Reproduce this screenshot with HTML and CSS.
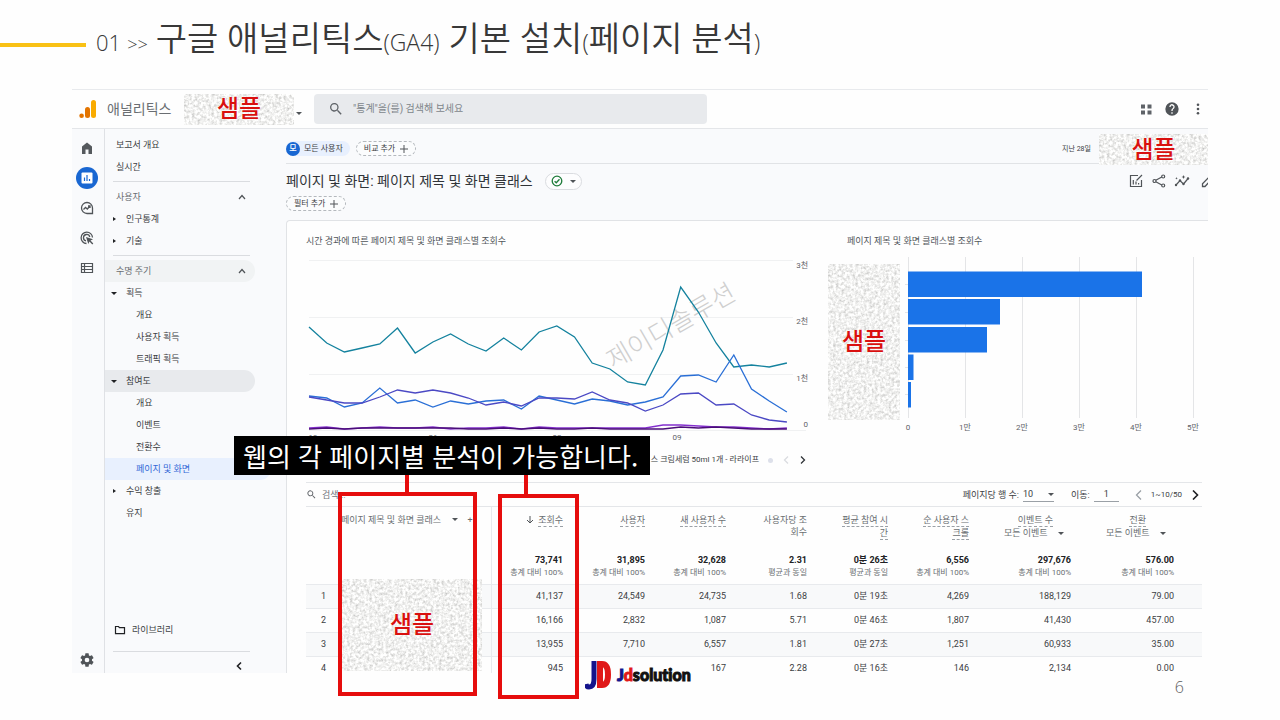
FILE: index.html
```html
<!DOCTYPE html>
<html lang="ko">
<head>
<meta charset="utf-8">
<title>구글 애널리틱스(GA4) 기본 설치</title>
<link rel="stylesheet" href="styles.css">
</head>
<body>
<svg class="defs" width="0" height="0" aria-hidden="true">
  <filter id="grain" x="0" y="0" width="100%" height="100%">
    <feTurbulence type="fractalNoise" baseFrequency="0.36" numOctaves="3" seed="4"/>
    <feColorMatrix values="0.8 0 0 0 0.48  0.8 0 0 0 0.48  0.8 0 0 0 0.47  0 0 0 0 1"/>
  </filter>
</svg>

<header class="slide-head">
  <span class="rule"></span>
  <h1 class="slide-title"><span class="num">01</span><span class="chev">&gt;&gt;</span>구글 애널리틱스<span class="lat">(GA4)</span> 기본 설치<span class="lat">(</span>페이지 분석<span class="lat">)</span></h1>
</header>

<main class="stage">
  <div class="app">
    <div class="topbar">
      <svg class="logo" viewBox="0 0 18 19"><rect x="12" y="0" width="5" height="18" rx="2.5" fill="#f9ab00"/><rect x="6" y="7" width="5" height="11" rx="2.5" fill="#e37400"/><circle cx="2.6" cy="15.8" r="2.3" fill="#e37400"/></svg>
      <span class="brand">애널리틱스</span>
      <div class="mask mask-account"><svg class="grain"><rect width="100%" height="100%" filter="url(#grain)"/></svg><span>샘플</span></div>
      <span class="caret caret-account"></span>
      <label class="search">
        <svg class="i16" viewBox="0 0 24 24"><path fill="#5f6368" d="M15.5 14h-.8l-.3-.3A6.5 6.5 0 1 0 13.700 14.400l.3.3v.8l5 5 1.500-1.500zm-6 0a4.500 4.500 0 1 1 0-9 4.500 4.500 0 0 1 0 9z"/></svg>
        <input type="text" placeholder="&quot;통계&quot;을(를) 검색해 보세요">
      </label>
      <div class="top-actions">
        <button aria-label="앱"><svg class="i16" viewBox="0 0 16 16" fill="#5f6368"><path d="M3 3.500h4v4H3zM9.500 3.500h4v4h-4zM3 9.500h4v4H3zM9.500 9.500h4v4h-4z"/></svg></button>
        <button aria-label="도움말"><svg class="i16" viewBox="0 0 24 24"><path fill="#505458" d="M12 2a10 10 0 1 0 0 20 10 10 0 0 0 0-20zm1 17h-2v-2h2zm2.070-7.750-.9.920C13.450 12.900 13 13.500 13 15h-2v-.5c0-1.100.450-2.100 1.170-2.830l1.240-1.260A2 2 0 1 0 10 9H8a4 4 0 1 1 7.070 2.250z"/></svg></button>
        <button aria-label="더보기"><svg class="i16" viewBox="0 0 16 16" fill="#505458"><circle cx="8" cy="3.700" r="1.300"/><circle cx="8" cy="8" r="1.300"/><circle cx="8" cy="12.300" r="1.300"/></svg></button>
      </div>
    </div>

    <div class="body">
      <nav class="rail" aria-label="기본">
        <button aria-label="홈"><svg class="i16" viewBox="0 0 16 16"><path fill="#55595d" d="M3 14V6.500L8 2.500l5 4V14H9.500V9.500h-3V14z"/></svg></button>
        <button aria-label="보고서" class="on"><svg class="i16" viewBox="0 0 16 16"><rect x="2.500" y="2.500" width="11" height="11" rx="1" fill="#fff"/><path stroke="#1967d2" stroke-width="1.200" d="M5.500 7.500V11M8 5v6M10.500 9v2"/></svg></button>
        <button aria-label="탐색"><svg class="i16" viewBox="0 0 16 16" fill="none" stroke="#505458" stroke-width="1.300"><path d="M13.500 13.500H8A5.500 5.500 0 1 1 13.500 8z"/><path d="M4.500 9.500 6.500 7.500l1.800 1.500 2.700-3M9 6h2v2"/></svg></button>
        <button aria-label="광고"><svg class="i16" viewBox="0 0 16 16" fill="none" stroke="#505458" stroke-width="1.300"><path d="M7.500 13.500A5.700 5.700 0 1 1 13.500 7.500M7 10.800A3.200 3.200 0 1 1 10.800 7"/><path fill="#505458" stroke="none" d="M7 7l7 2.300-2.500 1.300 2.800 2.800-1 1-2.800-2.800L9.300 14z"/></svg></button>
        <button aria-label="구성"><svg class="i16" viewBox="0 0 16 16" fill="none" stroke="#505458" stroke-width="1.200"><path d="M2.500 3.500h11v9h-11zM5.500 3.500v9M2.500 6.500h11M2.500 9.500h11"/></svg></button>
        <button aria-label="관리" class="gear"><svg class="i16" viewBox="0 0 24 24"><path fill="#505458" d="M19.430 12.980a7.800 7.800 0 0 0 0-1.960l2.110-1.650a.5.5 0 0 0 .120-.640l-2-3.460a.5.5 0 0 0-.610-.220l-2.490 1a7.300 7.300 0 0 0-1.690-.980l-.380-2.650A.490.490 0 0 0 14 2h-4a.490.490 0 0 0-.490.420l-.380 2.650c-.610.250-1.170.590-1.690.980l-2.490-1a.490.490 0 0 0-.610.220l-2 3.460a.490.490 0 0 0 .120.640l2.110 1.650a7.900 7.900 0 0 0 0 1.960l-2.110 1.650a.5.5 0 0 0-.120.640l2 3.460c.120.220.390.300.610.220l2.490-1c.520.400 1.080.730 1.690.980l.380 2.650c.030.240.240.420.490.420h4c.250 0 .460-.180.490-.420l.380-2.650a7.700 7.700 0 0 0 1.690-.980l2.490 1c.230.090.490 0 .610-.220l2-3.460a.5.5 0 0 0-.120-.640zM12 15.500a3.500 3.500 0 1 1 0-7 3.500 3.500 0 0 1 0 7z"/></svg></button>
      </nav>

      <nav class="side" aria-label="보고서">
        <a class="item" href="#">보고서 개요</a>
        <a class="item" href="#">실시간</a>
        <hr>
        <button class="item section">사용자<svg class="up" viewBox="0 0 8 8"><path d="M1 6l3-3.500L7 6"/></svg></button>
        <a class="item l1 closed" href="#">인구통계</a>
        <a class="item l1 closed" href="#">기술</a>
        <hr>
        <button class="item section tint">수명 주기<svg class="up" viewBox="0 0 8 8"><path d="M1 6l3-3.500L7 6"/></svg></button>
        <a class="item l1 open" href="#">획득</a>
        <a class="item l2" href="#">개요</a>
        <a class="item l2" href="#">사용자 획득</a>
        <a class="item l2" href="#">트래픽 획득</a>
        <a class="item l1 open parent" href="#">참여도</a>
        <a class="item l2" href="#">개요</a>
        <a class="item l2" href="#">이벤트</a>
        <a class="item l2" href="#">전환수</a>
        <a class="item l2 current" href="#">페이지 및 화면</a>
        <a class="item l1 closed" href="#">수익 창출</a>
        <a class="item l1" href="#">유지</a>
        <a class="item library" href="#"><svg class="folder" viewBox="0 0 12 10"><path d="M1.500 1.500h3l1 1.200h5v6h-9z"/></svg>라이브러리</a>
        <hr>
        <button class="collapse" aria-label="접기"><svg viewBox="0 0 8 10"><path d="M6 1.500L2.500 5 6 8.500"/></svg></button>
      </nav>

      <section class="report">
        <div class="compare">
          <span class="chip-all"><b>모</b>모든 사용자</span>
          <button class="chip">비교 추가<svg class="plus" viewBox="0 0 8 8"><path d="M4 0v8M0 4h8"/></svg></button>
          <span class="range">지난 28일</span>
          <div class="mask mask-date"><svg class="grain"><rect width="100%" height="100%" filter="url(#grain)"/></svg><span>샘플</span></div>
        </div>

        <div class="title-row">
          <h2>페이지 및 화면: 페이지 제목 및 화면 클래스</h2>
          <button class="status" aria-label="상태"><svg class="check" viewBox="0 0 12 12"><circle cx="6" cy="6" r="4.800"/><path d="M3.600 6.200l1.700 1.600 3.200-3.500"/></svg><span class="caret"></span></button>
          <div class="title-actions">
            <button aria-label="맞춤설정"><svg class="i16" viewBox="0 0 16 16" fill="none" stroke="#505458" stroke-width="1.200"><path d="M10 2.500H2.500v11h11V7M5.300 7v4.500M8 8.500v3M10.600 10v1.500M8.500 7.500l5.500-5.500"/></svg></button>
            <button aria-label="공유"><svg class="i16" viewBox="0 0 16 16" fill="none" stroke="#505458" stroke-width="1.200"><path d="M4.800 7.300l6-3.300M4.800 8.700l6 3.300"/><circle cx="3.500" cy="8" r="1.500"/><circle cx="12.200" cy="3.500" r="1.500"/><circle cx="12.200" cy="12.500" r="1.500"/></svg></button>
            <button aria-label="통계"><svg class="i16" viewBox="0 0 16 16"><path fill="none" stroke="#505458" stroke-width="1.200" d="M2 12l4-4.500L9.500 11 14.500 5"/><g fill="#505458"><circle cx="2" cy="12" r="1.200"/><circle cx="6" cy="7.500" r="1.200"/><circle cx="9.500" cy="11" r="1.200"/><circle cx="14" cy="5.500" r="1.200"/><path d="M9.500 2l.6 1.400 1.400.6-1.400.6-.6 1.400-.6-1.400L7.500 4l1.400-.6zM2.500 4l.4.9.9.4-.9.4-.4.900-.4-.9-.9-.4.900-.4z"/></g></svg></button>
            <button aria-label="수정" class="pencil"><svg viewBox="0 0 11 16" fill="none" stroke="#505458" stroke-width="1.300"><path d="M5.500 13.500v-2.700l7-7.300 2.500 2.500-7 7.500z"/></svg></button>
          </div>
        </div>
        <button class="chip chip-filter">필터 추가<svg class="plus" viewBox="0 0 8 8"><path d="M4 0v8M0 4h8"/></svg></button>

        <div class="card">
          <div class="charts">
            <div class="chart">
              <h3>시간 경과에 따른 페이지 제목 및 화면 클래스별 조회수</h3>
              <svg class="lines" viewBox="0 0 522 195">
                <path class="grid" d="M3 10.500H487M3 67.500H487M3 124.500H487M3 180.500H500"/>
                <text class="watermark" x="365" y="85" transform="rotate(-30 365 76)">제이디솔루션</text>
                <g class="axis"><text x="502" y="18">3천</text><text x="502" y="74">2천</text><text x="502" y="131">1천</text><text x="502" y="177">0</text></g>
                <g class="axis mid"><text x="7" y="190">19</text><text x="127" y="190">26</text><text x="251" y="190">02</text><text x="371" y="190">09</text></g>
                <g id="series"></g>
              </svg>
              <div class="legend"><span>스 크림세럼 50ml 1개 - 라라이프</span><i class="dot"></i><button aria-label="이전" disabled><svg viewBox="0 0 8 10"><path d="M6 1.500L2.500 5 6 8.500"/></svg></button><button aria-label="다음"><svg viewBox="0 0 8 10"><path d="M2 1.500L5.500 5 2 8.500"/></svg></button></div>
            </div>
            <div class="chart">
              <h3 class="inset">페이지 제목 및 화면 클래스별 조회수</h3>
              <div class="bars-row">
                <div class="mask mask-bars"><svg class="grain"><rect width="100%" height="100%" filter="url(#grain)"/></svg><span>샘플</span></div>
                <svg class="bars" viewBox="0 0 308 195">
                  <path class="grid dark" d="M8.500 7V168M65.500 7V168M122.500 7V168M179.500 7V168M236.500 7V168M293.500 7V168"/>
                  <path class="grid dark" d="M5 34.500h3M5 62.500h3M5 90.500h3M5 117.500h3M5 144.500h3"/>
                  <g fill="#1a73e8"><rect x="8" y="21.500" width="234" height="25.500"/><rect x="8" y="49" width="92" height="25.500"/><rect x="8" y="77" width="79" height="25.500"/><rect x="8" y="104.500" width="5.500" height="25.500"/><rect x="8" y="132" width="3" height="25.500"/></g>
                  <g class="axis mid"><text x="8" y="180">0</text><text x="65" y="180">1만</text><text x="122" y="180">2만</text><text x="179" y="180">3만</text><text x="236" y="180">4만</text><text x="293" y="180">5만</text></g>
                </svg>
              </div>
            </div>
          </div>

          <div class="tools">
            <label class="find"><svg viewBox="0 0 24 24"><path fill="#5f6368" d="M15.500 14h-.8l-.3-.3A6.500 6.500 0 1 0 13.700 14.400l.3.3v.8l5 5 1.500-1.500zm-6 0a4.500 4.500 0 1 1 0-9 4.500 4.500 0 0 1 0 9z"/></svg><input type="text" placeholder="검색..."></label>
            <label class="rows">페이지당 행 수: <span class="pick"><select><option>10</option></select><i class="caret"></i></span></label>
            <label class="goto">이동: <input type="text" value="1"></label>
            <button class="prev" aria-label="이전 페이지"><svg viewBox="0 0 8 10"><path d="M6 .5L1.500 5 6 9.500"/></svg></button>
            <span class="count">1~10/50</span>
            <button class="next" aria-label="다음 페이지"><svg viewBox="0 0 8 10"><path d="M2 .5L6.500 5 2 9.500"/></svg></button>
          </div>

          <table class="data">
            <colgroup><col class="c-n"><col class="c-name"><col class="c-a"><col class="c-a"><col class="c-b"><col class="c-b"><col class="c-b"><col class="c-b"><col class="c-e"><col class="c-z"></colgroup>
            <thead>
              <tr>
                <th></th>
                <th class="name">페이지 제목 및 화면 클래스 <i class="caret"></i> <i class="plus-s">+</i></th>
                <th><svg class="down" viewBox="0 0 8 8"><path d="M4 0v7M1 4l3 3 3-3"/></svg><u>조회수</u></th>
                <th><u>사용자</u></th>
                <th><u>새 사용자 수</u></th>
                <th>사용자당 조<br>회수</th>
                <th><u>평균 참여 시</u><br><u>간</u></th>
                <th><u>순 사용자 스</u><br><u>크롤</u></th>
                <th class="ev"><u>이벤트 수</u><br><span class="pick"><select aria-label="이벤트"><option>모든 이벤트</option></select><i class="caret"></i></span></th>
                <th class="ev"><u>전환</u><br><span class="pick"><select aria-label="전환"><option>모든 이벤트</option></select><i class="caret"></i></span></th>
              </tr>
            </thead>
            <tbody>
              <tr class="sum"><td></td><td class="name"></td><td><b>73,741</b>총계 대비 100%</td><td><b>31,895</b>총계 대비 100%</td><td><b>32,628</b>총계 대비 100%</td><td><b>2.31</b>평균과 동일</td><td><b>0분 26초</b>평균과 동일</td><td><b>6,556</b>총계 대비 100%</td><td><b>297,676</b>총계 대비 100%</td><td><b>576.00</b>총계 대비 100%</td></tr>
              <tr class="odd"><td>1</td><td class="name"></td><td>41,137</td><td>24,549</td><td>24,735</td><td>1.68</td><td>0분 19초</td><td>4,269</td><td>188,129</td><td>79.00</td></tr>
              <tr><td>2</td><td class="name"></td><td>16,166</td><td>2,832</td><td>1,087</td><td>5.71</td><td>0분 46초</td><td>1,807</td><td>41,430</td><td>457.00</td></tr>
              <tr class="odd"><td>3</td><td class="name"></td><td>13,955</td><td>7,710</td><td>6,557</td><td>1.81</td><td>0분 27초</td><td>1,251</td><td>60,933</td><td>35.00</td></tr>
              <tr><td>4</td><td class="name"></td><td>945</td><td></td><td>167</td><td>2.28</td><td>0분 16초</td><td>146</td><td>2,134</td><td>0.00</td></tr>
            </tbody>
          </table>
        </div>
      </section>
    </div>
  </div>

  <div class="mask mask-table"><svg class="grain"><rect width="100%" height="100%" filter="url(#grain)"/></svg><span>샘플</span></div>
  <div class="stem stem-a"></div>
  <div class="stem stem-b"></div>
  <div class="frame frame-a"></div>
  <div class="frame frame-b"></div>
  <p class="callout">웹의 각 페이지별 분석이 가능합니다.</p>
  <div class="jd">
    <svg viewBox="0 0 28 30"><path fill="none" stroke="#14148c" stroke-width="5" d="M9 1v18q0 8-5 8-2.500 0-3-3"/><path fill="none" stroke="#e01818" stroke-width="6" d="M15 4h2q6 0 6 10.500t-6 10.500h-2z"/></svg>
    <span class="jd-name"><span class="j">J</span><span class="d">d</span>solution</span>
  </div>
</main>

<footer class="slide-foot">6</footer>
<script src="chart.js"></script>
</body>
</html>
```
FILE: chart.js
```js
const STEP = 17.7;
const series = [
  { color: "#14829e", y: [77,93,102,98,94,78,103,92,84,94,101,88,100,82,76,87,113,119,132,135,100,37,62,93,117,115,117,113] },
  { color: "#2a6fd6", y: [146,148,157,153,138,153,150,157,151,154,151,150,159,146,150,154,149,151,155,152,147,126,125,132,105,139,151,162] },
  { color: "#4b49c4", y: [147,150,153,153,147,140,143,140,143,148,155,152,156,148,148,149,142,150,153,161,155,144,143,155,154,165,170,172] },
  { color: "#8430ce", y: [178,177,179,178,177,178,178,177,179,178,178,177,179,177,178,178,178,178,178,178,175,175,176,177,177,178,179,178] },
  { color: "#4a0d78", y: [179,178,179,178,178,178,178,178,178,179,179,178,179,178,179,179,178,179,179,179,179,177,178,177,178,179,179,179] }
];
const group = document.getElementById("series");
for (const s of series) {
  const line = document.createElementNS("http://www.w3.org/2000/svg", "polyline");
  line.setAttribute("points", s.y.map((y, i) => (3 + i * STEP).toFixed(1) + "," + y).join(" "));
  line.setAttribute("stroke", s.color);
  group.appendChild(line);
}
```
FILE: styles.css
```css
* { box-sizing: border-box; }
body {
  margin: 0;
  height: 100vh;
  display: flex;
  flex-direction: column;
  background: #fefefe;
  color: #3c4043;
  font: 9px/14px Roboto, "Noto Sans CJK KR", sans-serif;
}
h1, h2, h3, p { margin: 0; font-weight: 400; }
button, input, select { font: inherit; color: inherit; border: 0; padding: 0; background: none; }
button { display: inline-flex; align-items: center; justify-content: center; }
select { appearance: none; }
a { color: inherit; text-decoration: none; }
hr { border: 0; border-top: 1px solid #dadce0; }
.defs { position: absolute; }
.i16 { width: 16px; height: 16px; display: block; }
.caret { display: inline-block; border: 3px solid transparent; border-top-color: #505458; border-bottom: 0; }

.slide-head { height: 89px; flex: none; display: flex; align-items: center; gap: 10px; }
.rule { width: 86px; height: 4px; background: #f9c115; }
.slide-title { font: 350 34px/48px "Open Sans", "Noto Sans CJK KR", sans-serif; color: #383838; padding-bottom: 8px; white-space: nowrap; }
.num { font-size: 22px; margin-right: 6px; }
.chev { font-size: 18px; margin-right: 8px; }
.lat { font-size: 23px; }

.stage { position: relative; flex: 1; min-height: 0; margin: 0 72px; }
.app { height: 100%; display: flex; flex-direction: column; overflow: hidden; border-top: 1px solid #e8eaed; background: #f9fafc; }
.slide-foot { flex: none; height: 47px; padding: 4px 96px 0 0; text-align: right; font: 300 16px/20px "Open Sans", sans-serif; color: #606060; }

.mask { position: relative; display: flex; align-items: center; justify-content: center; color: #d9100f; font-size: 24px; line-height: 30px; overflow: hidden; }
.mask span { position: relative; font-weight: 500; text-shadow: 0 0 2px #fff; }
.grain { position: absolute; inset: 0; width: 100%; height: 100%; }

.topbar { flex: none; height: 39px; display: flex; align-items: center; background: #fefefe; border-bottom: 1px solid #e4e6e9; padding: 0 2px 0 7px; }
.logo { width: 18px; height: 19px; }
.brand { font-size: 14px; line-height: 20px; color: #6a6e72; width: 77px; margin-left: 10px; white-space: nowrap; }
.mask-account { width: 110px; height: 31px; }
.caret-account { margin: 8px 12px 0 2px; }
.search { flex: 0 1 393px; height: 30px; display: flex; align-items: center; gap: 9px; padding-left: 14px; background: #e8eaed; border-radius: 4px; }
.search input { flex: 1; min-width: 0; font-size: 10px; }
.search input::placeholder { color: #80868b; opacity: 1; }
.top-actions { margin-left: auto; display: flex; gap: 10px; }

.body { flex: 1; min-height: 0; display: flex; }
.rail { width: 33px; flex: none; display: flex; flex-direction: column; align-items: center; gap: 8px; padding: 8px 2px 2px 0; border-right: 1px solid #dfe1e5; }
.rail button { width: 22px; height: 22px; border-radius: 50%; }
.rail .on { background: #1967d2; }
.rail .gear { margin-top: auto; }

.side { width: 166px; flex: none; display: flex; flex-direction: column; padding-top: 5px; }
.side hr { width: 137px; margin: 3px 0 4px 8px; }
.item { display: flex; align-items: center; flex: none; position: relative; width: 150px; height: 22px; padding-left: 11px; border-radius: 0 11px 11px 0; font-size: 9px; text-align: left; }
.section { justify-content: flex-start; color: #6a6e72; padding-right: 9px; }
.up { width: 8px; height: 8px; margin-left: auto; fill: none; stroke: #505458; stroke-width: 1.2; }
.tint { background: #f1f3f4; }
.l1 { padding-left: 21px; }
.l2 { padding-left: 31px; }
.closed::before, .open::before { content: ""; position: absolute; left: 8px; border: 2px solid transparent; }
.closed::before { border-left: 3px solid #202124; border-right: 0; }
.open::before { left: 6px; border: 3px solid transparent; border-top-color: #202124; border-bottom: 0; }
.parent { background: #e8eaed; }
.current { width: auto; background: #e8f0fe; color: #3367d6; }
.library { margin-top: auto; margin-bottom: 7px; gap: 6px; padding-left: 9px; }
.folder { width: 12px; height: 10px; fill: none; stroke: #202124; stroke-width: 1.2; }
.collapse { width: 12px; height: 14px; margin: 3px 0 0 128px; }
.collapse svg { width: 8px; height: 10px; fill: none; stroke: #202124; stroke-width: 1.6; }

.report { flex: 1; min-width: 0; padding-left: 15px; display: flex; flex-direction: column; align-items: stretch; }
.compare { position: relative; flex: none; height: 35px; display: flex; align-items: center; padding-top: 5px; border-bottom: 1px solid #e1e3e6; font-size: 8px; }
.chip-all { display: flex; align-items: center; gap: 4px; height: 15px; padding-right: 7px; border-radius: 8px; background: #e8f0fe; }
.chip-all b { width: 14px; height: 14px; border-radius: 50%; background: #1967d2; color: #fff; text-align: center; font-weight: 500; }
.chip { height: 15px; padding: 0 7px; gap: 5px; border: 1px dashed #b4b8bd; border-radius: 8px; font-size: 8px; line-height: 12px; margin-left: 6px; background: #fbfcfd; }
.plus { width: 8px; height: 8px; fill: none; stroke: #505458; stroke-width: 1; }
.range { margin-left: auto; padding-right: 117px; font-size: 7px; }
.mask-date { position: absolute; right: 0; top: 5px; width: 109px; height: 31px; }
.title-row { flex: none; display: flex; align-items: center; height: 32px; padding-top: 2px; }
.title-row h2 { font-size: 14px; line-height: 20px; white-space: nowrap; color: #303438; }
.status { width: 37px; height: 17px; margin-left: 12px; gap: 7px; border: 1px solid #dadce0; border-radius: 9px; background: #fdfdfe; }
.check { width: 12px; height: 12px; fill: none; stroke: #1e7b3a; stroke-width: 1.3; }
.title-actions { margin-left: auto; display: flex; gap: 7px; height: 16px; overflow: hidden; }
.title-actions .pencil svg { width: 11px; height: 16px; display: block; }
.chip-filter { align-self: flex-start; flex: none; margin: 0; }

.card { flex: 1; min-height: 0; margin-top: 9px; padding-left: 19px; background: #fefefe; border: 1px solid #e1e3e6; border-width: 1px 0 0 1px; border-radius: 4px 0 0 0; overflow: hidden; }
.charts { display: grid; grid-template-columns: 522fr 380fr; padding-top: 13px; }
.chart h3 { font-size: 9px; line-height: 14px; color: #50555a; white-space: nowrap; }
.chart .inset { padding-left: 19px; }
.lines { display: block; width: 100%; margin-top: 2px; }
.lines polyline { fill: none; stroke-width: 1.3; }
.grid { fill: none; stroke: #f0f1f2; }
.dark { stroke: #e4e5e7; }
.axis { font-size: 8px; fill: #5f6368; text-anchor: end; }
.mid { text-anchor: middle; }
.watermark { font-size: 26px; font-weight: 300; fill: #cfcfcf; text-anchor: middle; }
.legend { display: flex; align-items: center; justify-content: flex-end; gap: 9px; height: 16px; margin: 7px 21px 14px 0; font-size: 8px; }
.legend svg { width: 8px; height: 10px; display: block; fill: none; stroke: #303438; stroke-width: 1.3; }
.legend button:disabled svg { stroke: #dadce0; }
.dot { width: 5px; height: 5px; border-radius: 50%; background: #dde0ea; }
.bars-row { display: flex; margin-top: 2px; }
.mask-bars { flex: none; width: 72px; height: 156px; margin-top: 14px; }
.bars { display: block; flex: 1; min-width: 0; }

.tools { display: flex; align-items: center; height: 25px; margin-right: 6px; border-top: 1px solid #e4e6e9; border-bottom: 1px solid #e4e6e9; }
.tools svg { width: 8px; height: 10px; display: block; fill: none; stroke: #9aa0a6; stroke-width: 1.3; }
.find { display: flex; align-items: center; gap: 5px; flex: 1; }
.find svg { width: 11px; height: 11px; stroke: none; }
.find input { width: 80px; }
.find input::placeholder { color: #70757a; opacity: 1; }
.rows, .goto { display: flex; align-items: center; gap: 4px; }
.rows .pick { width: 31px; height: 14px; border-bottom: 1px solid #9aa0a6; }
.goto { margin: 0 16px 0 17px; }
.goto input { width: 25px; height: 14px; text-align: center; border-bottom: 1px solid #9aa0a6; }
.count { font-size: 8px; }
.prev { margin-right: 8px; }
.next { margin: 0 3px 0 9px; }
.next svg { stroke: #202124; stroke-width: 1.6; }
.pick { display: inline-flex; align-items: center; justify-content: space-between; }

.data { width: calc(100% - 6px); table-layout: fixed; border-collapse: collapse; text-align: right; }
.c-n { width: 32px; }
.c-name { width: 153px; }
.c-a { width: 82px; }
.c-b { width: 81px; }
.c-e { width: 102px; }
.data th, .data td { padding: 0 10px 0 0; }
.data th { height: 46px; padding-top: 7px; vertical-align: top; font-weight: 400; line-height: 12px; color: #6a6e72; white-space: nowrap; }
.data u { display: inline-block; text-decoration: none; border-bottom: 1px dashed #9aa0a6; }
.data .name { text-align: left; padding-left: 3px; border-right: 1px solid #e8eaed; }
.data .name .caret { margin: 0 7px 2px 9px; }
.plus-s { font-style: normal; }
.down { width: 8px; height: 8px; margin-right: 4px; fill: none; stroke: #505458; vertical-align: -1px; }
.data .ev { padding-right: 28px; }
.ev .pick { width: 60px; margin-right: -11px; }
.ev select { width: 50px; }
.data th:last-child { padding-right: 56px; }
.data th:last-child .pick { margin-right: -20px; }
.data td:last-child { padding-right: 28px; }
.data td { height: 24px; border-top: 1px solid #e8eaed; line-height: 10px; }
.data td:first-child { padding-right: 12px; }
.data .sum td { height: 31px; border-top: 0; font-size: 8px; line-height: 12px; color: #6a6e72; vertical-align: top; white-space: nowrap; }
.sum b { display: block; font-size: 9px; line-height: 14px; color: #202124; font-weight: 700; }
.odd { background: #f8f9fa; }

.mask-table { position: absolute; left: 270px; top: 490px; width: 140px; height: 92px; }
.frame { position: absolute; border: 4px solid #e60d0d; }
.frame-a { left: 266px; top: 403px; width: 139px; height: 204px; }
.frame-b { left: 426px; top: 405px; width: 81px; height: 205px; }
.stem { position: absolute; width: 4px; height: 20px; top: 386px; background: #e60d0d; }
.stem-a { left: 333px; }
.stem-b { left: 452px; }
.callout { position: absolute; left: 162px; top: 347px; padding: 0 12px 0 9px; background: #000; color: #fff; font: 26px/39px "Noto Sans CJK KR", sans-serif; white-space: nowrap; }
.jd { position: absolute; left: 511px; top: 568px; display: flex; align-items: center; gap: 4px; height: 35px; padding: 2px; background: #fefefe; }
.jd svg { width: 28px; height: 30px; }
.jd-name { font: 900 16px/20px Lato, sans-serif; color: #111; -webkit-text-stroke: 1px; font-variant-ligatures: none; }
.j { color: #14148c; }
.d { color: #e01818; }
```
